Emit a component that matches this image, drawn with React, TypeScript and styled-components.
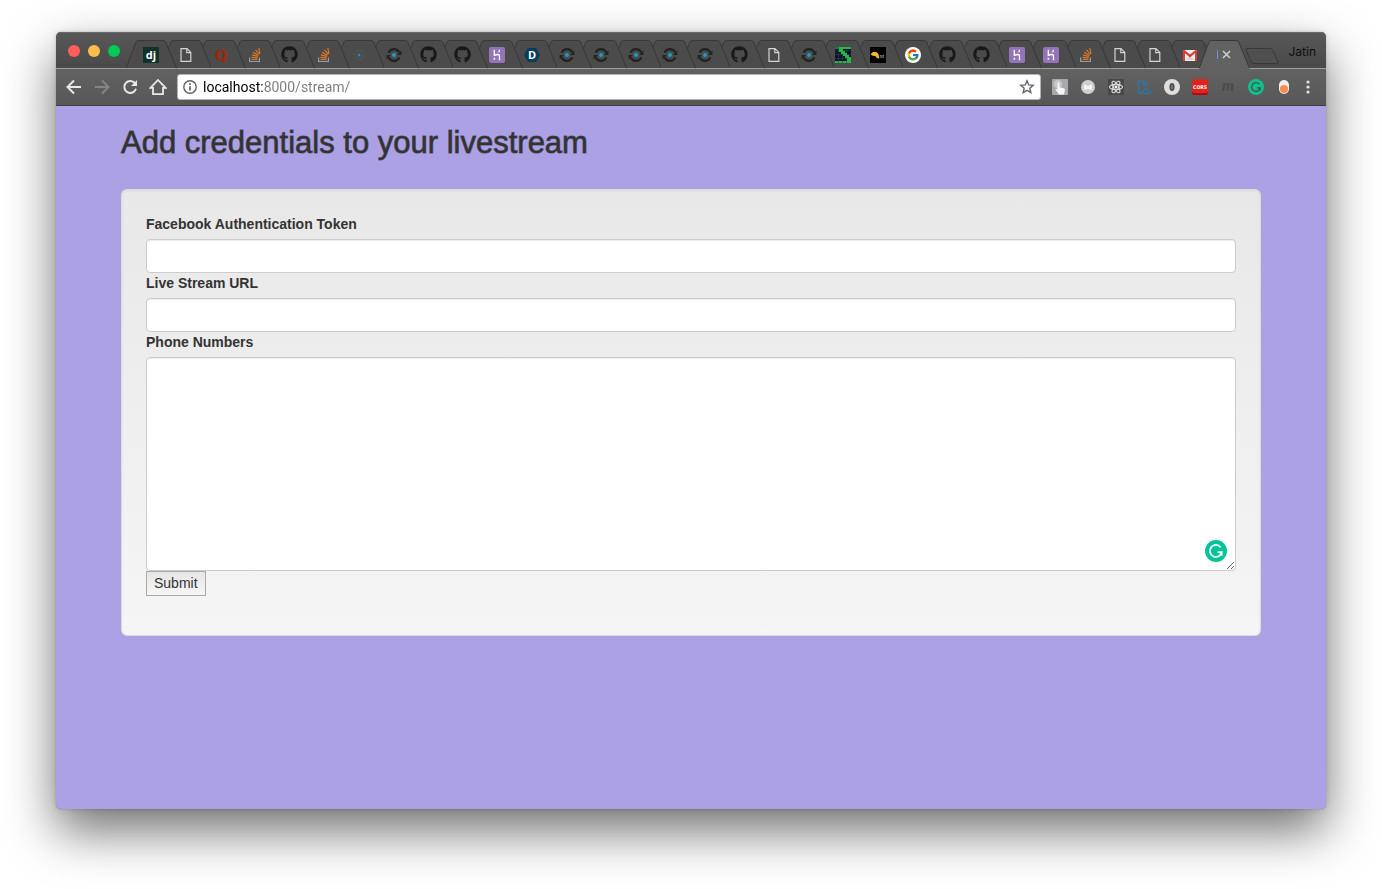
import React from 'react';
import styled, { createGlobalStyle, css } from 'styled-components';
import { FaGithub, FaReact } from 'react-icons/fa';
import { FcGoogle } from 'react-icons/fc';

const GlobalStyle = createGlobalStyle`
  *, *::before, *::after { box-sizing: border-box; }
  body {
    margin: 0;
    background: #fff;
    color: #333;
    font: 14px/20px "Liberation Sans", Arial, sans-serif;
  }
`;

const Window = styled.div`
  margin: 32px 56px 80px;
  border-radius: 5px;
  background: #aba1e4;
  box-shadow: 0 0 1px rgba(0, 0, 0, 0.4), 0 22px 50px rgba(0, 0, 0, 0.56),
    0 0 6px rgba(0, 0, 0, 0.12);
`;

const Chrome = styled.header`
  border-radius: 5px 5px 0 0;
  overflow: hidden;
  border-bottom: 1px solid #3d3d3d;
`;

const TitleBar = styled.div`
  display: flex;
  align-items: flex-end;
  height: 37px;
  padding-left: 12px;
  background: linear-gradient(#585858, #494949);
  box-shadow: inset 0 1px #696969, inset 0 -1px #a0a0a0;
`;

const Lights = styled.div`
  display: flex;
  gap: 8px;
  align-self: center;
  width: 66px;
`;

const Light = styled.button<{ $color: string }>`
  width: 12px;
  height: 12px;
  padding: 0;
  border: 0;
  border-radius: 50%;
  background: ${(p) => p.$color};
`;

const TabStrip = styled.ul`
  display: flex;
  flex: 1;
  min-width: 0;
  height: 29px;
  margin: 0;
  padding: 0;
  list-style: none;
`;

const TabItem = styled.li<{ $layer: number }>`
  position: relative;
  z-index: ${(p) => p.$layer};
  flex: 1;
  min-width: 0;
`;

const TabShape = styled.svg`
  position: absolute;
  top: 0;
  left: -8px;
  width: calc(100% + 16px);
  height: 29px;
  pointer-events: none;
`;

const TabButton = styled.button`
  position: relative;
  display: flex;
  align-items: center;
  justify-content: center;
  gap: 4px;
  width: 100%;
  height: 29px;
  padding: 0;
  border: 0;
  background: none;
  color: #d8d8d8;
`;

const Caret = styled.span`
  width: 1px;
  height: 9px;
  background: #7d8fd0;
`;

const NewTab = styled.button`
  align-self: center;
  width: 34px;
  height: 17px;
  margin: 11px 9px 0 4px;
  padding: 0;
  border: 0;
  background: none;
  svg { display: block; }
`;

const Profile = styled.button`
  align-self: center;
  margin: 2px 10px 0 0;
  padding: 0;
  border: 0;
  background: none;
  color: #0c0c0c;
  font: 12px/16px Inter, sans-serif;
`;

const Toolbar = styled.div`
  display: flex;
  align-items: center;
  height: 36px;
  padding: 0 8px;
  background: linear-gradient(#626262, #575757);
`;

const iconButton = css`
  display: flex;
  align-items: center;
  justify-content: center;
  flex: none;
  padding: 0;
  border: 0;
  background: none;
`;

const NavButton = styled.button`
  ${iconButton}
  width: 20px;
  height: 20px;
  margin-right: 8px;
  color: #e8e8e8;
  &:disabled { color: #858585; }
`;

const Address = styled.form`
  display: flex;
  align-items: center;
  flex: 1;
  min-width: 0;
  height: 26px;
  margin: 0 9px 0 1px;
  padding: 0 5px 0 4px;
  border: 1px solid #b4b4b4;
  border-radius: 3px;
  background: #fff;
`;

const AddressInput = styled.input`
  flex: 1;
  min-width: 0;
  height: 22px;
  margin: 0 5px;
  padding: 0;
  border: 0;
  outline: 0;
  background: linear-gradient(90deg, #000 60px, #7b7b7b 60px);
  background-clip: text;
  -webkit-background-clip: text;
  color: transparent;
  font: 14px/20px Roboto, sans-serif;
`;

const AddressAction = styled.button`
  ${iconButton}
  width: 16px;
  height: 16px;
`;

const Extension = styled.button`
  ${iconButton}
  width: 20px;
  height: 20px;
  margin-left: 8px;
  &:first-of-type { margin-left: 0; }
`;

const Menu = styled(Extension)`
  margin-left: 4px;
`;

const Extensions = styled.div`
  display: flex;
`;

const Page = styled.main`
  padding: 20px 65px 173px;
`;

const Heading = styled.h2`
  margin: 0 0 30px;
  font-size: 31px;
  font-weight: 400;
  line-height: 33px;
  -webkit-text-stroke: 1px rgba(51, 51, 51, 0.7);
`;

const Well = styled.section`
  padding: 24px;
  border: 1px solid #dcdcdc;
  border-radius: 6px;
  background: linear-gradient(#e8e8e8, #f5f5f5);
  box-shadow: inset 0 1px 3px rgba(0, 0, 0, 0.05);
`;

const Form = styled.form`
  display: flex;
  flex-direction: column;
  align-items: stretch;
  margin-bottom: 15px;
`;

const Label = styled.label`
  margin-bottom: 5px;
  font-size: 14px;
  font-weight: 700;
  line-height: 20px;
`;

const field = css`
  display: block;
  width: 100%;
  padding: 6px 12px;
  border: 1px solid #ccc;
  border-radius: 4px;
  outline: 0;
  background: #fff;
  box-shadow: inset 0 1px 1px rgba(0, 0, 0, 0.075);
  color: #555;
  font: 14px/20px "Liberation Sans", Arial, sans-serif;
`;

const TextField = styled.input`
  ${field}
  height: 34px;
`;

const TextArea = styled.textarea`
  ${field}
  height: 214px;
  resize: vertical;
`;

const AreaWrap = styled.div`
  position: relative;
`;

const GrammarBadge = styled.button`
  position: absolute;
  right: 9px;
  bottom: 9px;
  width: 22px;
  height: 22px;
  padding: 0;
  border: 0;
  background: none;
  svg { display: block; }
`;

const Submit = styled.button`
  align-self: flex-start;
  height: 25px;
  padding: 0 7px 2px;
  border: 1px solid #a9a9a9;
  border-radius: 0;
  background: linear-gradient(#e6e6e6, #f6f6f6);
  color: #333;
  font: 14px/20px "Liberation Sans", Arial, sans-serif;
`;

const Django = () => (
  <svg width="16" height="16" viewBox="0 0 16 16">
    <rect width="16" height="16" fill="#113228" />
    <text x="8" y="12" textAnchor="middle" fontFamily="Open Sans" fontSize="11" fontWeight="700" fill="#fff">dj</text>
  </svg>
);

const Doc = () => (
  <svg width="16" height="16" viewBox="0 0 16 16" fill="none" stroke="#d4d4d4" strokeWidth="1.2">
    <path d="M3 1.6h6l3.8 3.8v9H3zM8.8 1.6v4h4" />
  </svg>
);

const Quora = () => (
  <svg width="16" height="16" viewBox="0 0 16 16">
    <text x="8" y="12.5" textAnchor="middle" fontFamily="Liberation Serif" fontSize="15" fontWeight="700" fill="#a82400" stroke="#a82400" strokeWidth="0.5">Q</text>
  </svg>
);

const Stack = () => (
  <svg width="16" height="16" viewBox="0 0 16 16" fill="none" strokeWidth="1.2">
    <path d="M2.6 10.5v4h9.8v-4" stroke="#9a9da0" />
    <path d="M4.5 12.5h6M4.5 10.3l6.1.6M5 7.8l5.8 1.7M6.2 5.2l5.1 3.2M8.5 2.8l3.7 4.6M11.8 1.2l1.1 5.6" stroke="#e07a22" />
  </svg>
);

const Github = () => <FaGithub size={17} color="#191919" />;

const Ring = ({ faint }: { faint?: boolean }) => (
  <svg width="16" height="16" viewBox="0 0 16 16" fill="none">
    {faint ? (
      <circle cx="8" cy="8" r="4.6" stroke="#5b5f63" strokeWidth="0.8" strokeDasharray="3 1.5" />
    ) : (
      <>
        <path d="M2.6 5.6A5.9 5.9 0 0 1 13.3 5.4M13.4 10.4A5.9 5.9 0 0 1 2.7 10.6" stroke="#222" strokeWidth="2.2" />
        <path d="M15.4 3.6V8H11zM.6 12.4V8H5z" fill="#222" />
      </>
    )}
    <circle cx="8" cy="8" r={faint ? 1.4 : 2} fill={faint ? '#168bd0' : '#13a0d0'} />
  </svg>
);

const Heroku = () => (
  <svg width="16" height="16" viewBox="0 0 16 16" fill="none">
    <rect width="16" height="16" rx="2" fill="#9474b8" />
    <path d="M5.3 2.8v5.5c2-.9 5.2-1.5 5.2.7v4.2M10.5 2.8c0 1.1-.4 1.9-1 2.6" stroke="#fff" strokeWidth="1.3" />
    <path d="M4.7 10.2v3.2l1.8-1.6z" fill="#fff" />
  </svg>
);

const Hexagon = () => (
  <svg width="16" height="16" viewBox="0 0 16 16">
    <path d="M4 1h8l4 7-4 7H4L0 8z" fill="#063d58" />
    <text x="8" y="12" textAnchor="middle" fontFamily="Open Sans" fontSize="11" fontWeight="700" fill="#fff">D</text>
  </svg>
);

const PixelS = () => (
  <svg width="16" height="16" viewBox="0 0 16 16">
    <rect width="16" height="16" fill="#11152a" />
    <path d="M0 3.5h16M0 7.5h16M0 11.5h16M3.5 0v16M7.5 0v16M11.5 0v16" stroke="#34394b" strokeWidth="0.6" />
    <path d="M4 0h12v2H8v2h2v2h2v2h2v2h2v4h-4v-3h-2V9H8V7H6V5H4zM0 14h16v2H0z" fill="#28b548" />
    <path d="M0 0h4v2H0z" fill="#1b7b37" />
    <path d="M3.5 14v2M7.5 14v2M11.5 14v2" stroke="#187935" />
  </svg>
);

const Bird = () => (
  <svg width="16" height="16" viewBox="0 0 16 16">
    <rect width="16" height="16" fill="#000" />
    <path d="M.8 7.5C1.7 5 4.5 4 6.7 5.2c1.8 1 2.4 3 2.4 6.2C7 11.5 6.2 10.2 5 8.7 3.7 9.3 2 8.8.8 7.5z" fill="#f4b82c" />
    <text x="9.5" y="11" fontFamily="Liberation Serif" fontStyle="italic" fontSize="6" fill="#ccc">nt</text>
  </svg>
);

const Google = () => (
  <svg width="16" height="16" viewBox="0 0 16 16">
    <circle cx="8" cy="8" r="8" fill="#fff" />
    <FcGoogle x={1.5} y={1.5} size={13} />
  </svg>
);

const Gmail = () => (
  <svg width="16" height="16" viewBox="0 0 16 16">
    <rect x="1" y="3" width="14" height="11" rx="1" fill="#f0eeee" />
    <path d="M3 13l5-4.5L13 13z" fill="#d8d5d5" />
    <path d="M1 14V3.8C1 2.8 2.2 2.7 2.8 3.2L8 7.6l5.2-4.4c.6-.5 1.8-.4 1.8.6V14h-2V6.2L8 10.4 3 6.2V14z" fill="#d93f34" />
  </svg>
);

const Cross = () => (
  <svg width="9" height="9" viewBox="0 0 9 9" stroke="#d0d0d0" strokeWidth="1.5">
    <path d="M1 1l7 7M8 1L1 8" />
  </svg>
);

type Tab = { title: string; Icon: React.ComponentType };
const FaintRing = () => <Ring faint />;
const LiveTab = () => (<><Caret /><Cross /></>);
const kinds: Record<string, Tab> = {
  j: { title: 'Django', Icon: Django },
  f: { title: 'Document', Icon: Doc },
  q: { title: 'Quora', Icon: Quora },
  s: { title: 'Stack Overflow', Icon: Stack },
  g: { title: 'GitHub', Icon: Github },
  o: { title: 'Loading', Icon: FaintRing },
  r: { title: 'Console', Icon: Ring as React.ComponentType },
  h: { title: 'Heroku', Icon: Heroku },
  d: { title: 'Docs', Icon: Hexagon },
  p: { title: 'Snake', Icon: PixelS },
  b: { title: 'Bird', Icon: Bird },
  G: { title: 'Google', Icon: Google },
  m: { title: 'Gmail', Icon: Gmail },
  x: { title: 'Livestream', Icon: LiveTab },
};
const tabs = [...'jfqsgsorgghdrrrrrgfrpbGgghhsffmx'].map((k) => kinds[k]);

const Grammarly = ({ size, color, ink }: { size: number; color: string; ink: string }) => (
  <svg width={size} height={size} viewBox="0 0 22 22" fill="none">
    <circle cx="11" cy="11" r="11" fill={color} />
    <path d="M15.6 7.2A6 6 0 1 0 16.8 12.2H12.6" stroke={ink} strokeWidth="1.7" />
    <path d="M13.6 12.3h3.9v4.2z" fill={ink} />
  </svg>
);

const extensions: { name: string; art: React.ReactNode }[] = [
  {
    name: 'Touch',
    art: (
      <svg width="16" height="16" viewBox="0 0 16 16">
        <rect width="16" height="16" rx="1" fill="#a9a9a9" />
        <circle cx="6" cy="5" r="4.3" fill="#c6c6c6" />
        <path d="M5.5 4.2c0-1.3 2-1.3 2 0v4l4.2 1c1 .3 1.3 1 1.1 2l-.7 4.3H7L3.7 11c-.5-1 .4-1.6 1.8-.4z" fill="#f3f6f8" />
      </svg>
    ),
  },
  {
    name: 'Mail',
    art: (
      <svg width="16" height="16" viewBox="0 0 16 16">
        <circle cx="8" cy="8" r="7" fill="#cfcfcf" />
        <path d="M4 5l4 2 4-2v6L8 10l-4 1z" fill="#f4f4f4" />
      </svg>
    ),
  },
  {
    name: 'React',
    art: (
      <svg width="16" height="16" viewBox="0 0 16 16">
        <rect width="16" height="16" fill="#484848" />
        <FaReact x={1} y={1} size={14} color="#f2f2f2" stroke="#f2f2f2" strokeWidth={14} />
      </svg>
    ),
  },
  {
    name: 'Cloud document',
    art: (
      <svg width="16" height="16" viewBox="0 0 16 16" fill="none" stroke="#2877ae" strokeWidth="1.2">
        <path d="M6 14.4H2.6V1.6h4.6l3.4 3.5v3M7.2 1.6v3.5h3.4" />
        <path d="M8 14.4C6 14.4 6 12 7.8 11.7C8.200 9.500 11 9.300 11.700 11.200C13 10.800 13.600 11.600 13.600 12.300C15.400 12.500 15.200 14.400 13.800 14.400Z" />
      </svg>
    ),
  },
  {
    name: 'Ring',
    art: (
      <svg width="16" height="16" viewBox="0 0 16 16">
        <circle cx="8" cy="8" r="8" fill="#dedede" />
        <ellipse cx="8" cy="8" rx="2.6" ry="4" fill="#505050" />
        <ellipse cx="8" cy="8" rx="1" ry="2.4" fill="#747474" />
      </svg>
    ),
  },
  {
    name: 'Cross-origin',
    art: (
      <svg width="16" height="16" viewBox="0 0 16 16">
        <rect y="1" width="16" height="15" rx="2" fill="#a90f0f" />
        <rect width="16" height="14" rx="2" fill="#e3221d" />
        <text x="8" y="10" textAnchor="middle" fontFamily="DejaVu Sans Condensed, Liberation Sans" fontSize="5" fontWeight="700" fill="#fff">CORS</text>
      </svg>
    ),
  },
  {
    name: 'Momentum',
    art: (
      <svg width="20" height="20" viewBox="0 0 20 20">
        <text x="10" y="14" textAnchor="middle" fontFamily="Liberation Serif" fontStyle="italic" fontWeight="700" fontSize="16" fill="#4b4b4b">m</text>
      </svg>
    ),
  },
  { name: 'Grammar', art: <Grammarly size={16} color="#12bf8c" ink="#454f4b" /> },
  {
    name: 'Switch',
    art: (
      <svg width="16" height="16" viewBox="0 0 16 16">
        <rect x="3" y="1" width="10" height="14" rx="5" fill="#eee" />
        <circle cx="8" cy="10" r="4" fill="#f98a4b" />
      </svg>
    ),
  },
];

export default function App() {
  return (
    <>
      <GlobalStyle />
      <Window>
        <Chrome>
          <TitleBar>
            <Lights>
              <Light $color="#ff5f58" aria-label="Close" />
              <Light $color="#ffbd4c" aria-label="Minimize" />
              <Light $color="#00ca56" aria-label="Zoom" />
            </Lights>
            <TabStrip>
              {tabs.map(({ title, Icon }, i) => {
                const active = i === tabs.length - 1;
                return (
                  <TabItem key={i} $layer={active ? 40 : tabs.length - i}>
                    <TabShape viewBox="0 0 51 29" preserveAspectRatio="none">
                      <path
                        d="M0 28.5L10 2Q11 .5 12.5 .5H37.5Q39 .5 40 2L51 28.5"
                        fill={active ? '#626262' : '#4b4b4b'}
                        stroke="#383838"
                      />
                      {active ? <path d="M1 28.5H50" stroke="#626262" strokeWidth="2" /> : <path d="M0 28.5H51" stroke="#a0a0a0" />}
                    </TabShape>
                    <TabButton aria-label={title}><Icon /></TabButton>
                  </TabItem>
                );
              })}
            </TabStrip>
            <NewTab aria-label="New tab">
              <svg width="34" height="17" viewBox="0 0 34 17">
                <path d="M3 .5H25Q27 .5 28 2.5L33 14Q33.5 15.5 31.5 15.5H9Q7 15.5 6 13.5L1 2Q.7 .5 3 .5z" fill="#4f4f4f" stroke="#383838" />
              </svg>
            </NewTab>
            <Profile>Jatin</Profile>
          </TitleBar>
          <Toolbar>
            <NavButton aria-label="Back">
              <svg width="16" height="16" viewBox="0 0 16 16" fill="none" stroke="currentColor" strokeWidth="2">
                <path d="M15 8H2M8 1.5L1.5 8L8 14.5" />
              </svg>
            </NavButton>
            <NavButton aria-label="Forward" disabled>
              <svg width="16" height="16" viewBox="0 0 16 16" fill="none" stroke="currentColor" strokeWidth="2">
                <path d="M1 8h13M8 1.5L14.5 8L8 14.5" />
              </svg>
            </NavButton>
            <NavButton aria-label="Reload">
              <svg width="16" height="16" viewBox="0 0 16 16" fill="none" stroke="currentColor" strokeWidth="2">
                <path d="M13 4.2A6 6 0 1 0 14 9.8" />
                <path d="M15 1v6H9z" fill="currentColor" stroke="none" />
              </svg>
            </NavButton>
            <NavButton aria-label="Home">
              <svg width="18" height="18" viewBox="0 0 18 18" fill="none" stroke="currentColor" strokeWidth="1.8">
                <path d="M1.5 9.8L9 2l7.5 7.8H14v6.3H4V9.8z" />
              </svg>
            </NavButton>
            <Address onSubmit={(e) => e.preventDefault()}>
              <AddressAction type="button" aria-label="Site information">
                <svg width="14" height="14" viewBox="0 0 14 14" fill="none" stroke="#5c5f63" strokeWidth="1.4">
                  <circle cx="7" cy="7" r="6.2" />
                  <path d="M7 6.2v4.3M7 3.3v1.7" strokeWidth="1.7" />
                </svg>
              </AddressAction>
              <AddressInput aria-label="Address" defaultValue="localhost:8000/stream/" spellCheck={false} />
              <AddressAction type="button" aria-label="Bookmark">
                <svg width="16" height="16" viewBox="0 0 16 16" fill="none" stroke="#62666b" strokeWidth="1.4">
                  <path d="M8 1.8l1.75 4.1 4.45.4-3.4 2.9 1.05 4.4L8 11.3l-3.85 2.3 1.05-4.4-3.4-2.9 4.45-.4z" />
                </svg>
              </AddressAction>
            </Address>
            <Extensions>
              {extensions.map(({ name, art }) => (
                <Extension key={name} aria-label={name}>{art}</Extension>
              ))}
              <Menu aria-label="Menu">
                <svg width="4" height="16" viewBox="0 0 4 16" fill="#e4e4e4">
                  <circle cx="2" cy="3" r="1.6" />
                  <circle cx="2" cy="8" r="1.6" />
                  <circle cx="2" cy="13" r="1.6" />
                </svg>
              </Menu>
            </Extensions>
          </Toolbar>
        </Chrome>
        <Page>
          <Heading>Add credentials to your livestream</Heading>
          <Well>
            <Form onSubmit={(e) => e.preventDefault()}>
              <Label htmlFor="token">Facebook Authentication Token</Label>
              <TextField id="token" type="text" />
              <Label htmlFor="url">Live Stream URL</Label>
              <TextField id="url" type="text" />
              <Label htmlFor="phones">Phone Numbers</Label>
              <AreaWrap>
                <TextArea id="phones" />
                <GrammarBadge type="button" aria-label="Check grammar">
                  <Grammarly size={22} color="#07c39a" ink="#fff" />
                </GrammarBadge>
              </AreaWrap>
              <Submit type="submit">Submit</Submit>
            </Form>
          </Well>
        </Page>
      </Window>
    </>
  );
}
